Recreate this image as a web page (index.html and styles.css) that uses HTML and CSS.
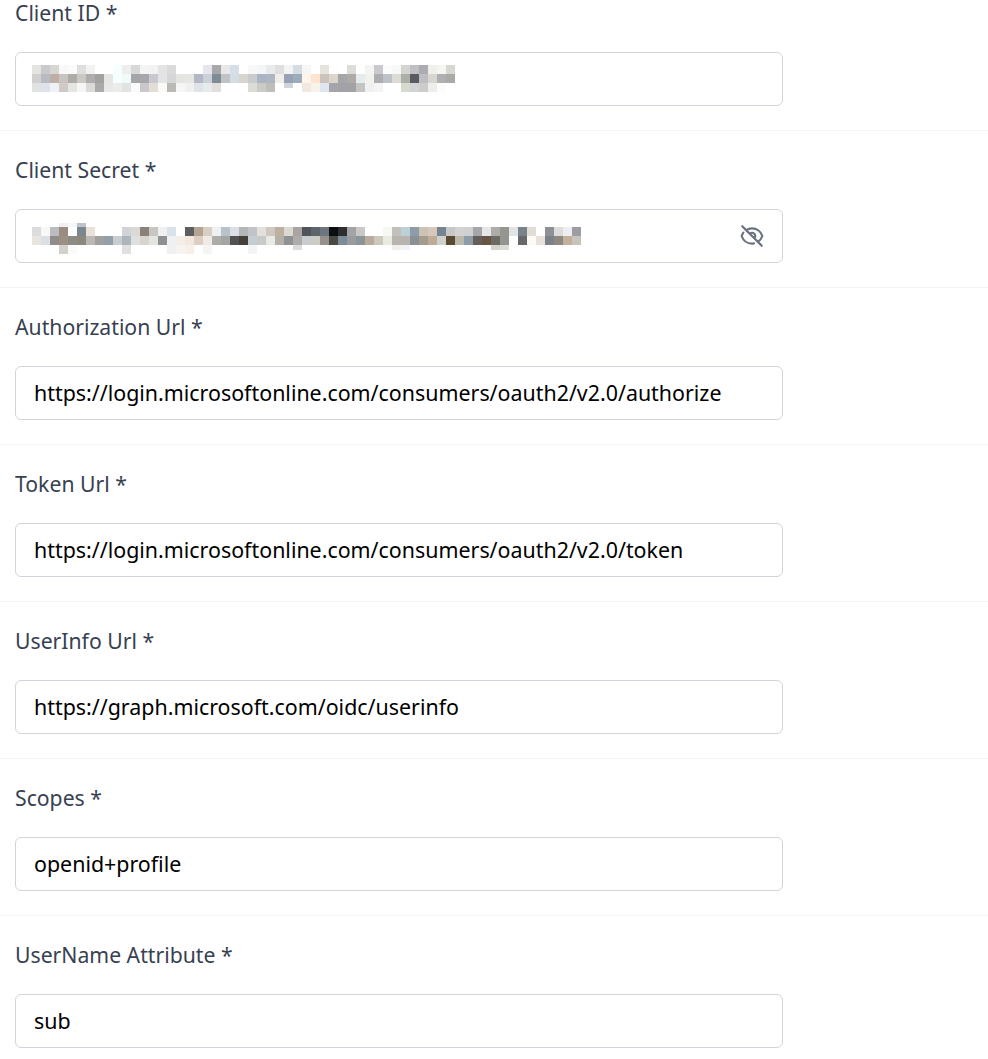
FILE: index.html
```html
<!DOCTYPE html>
<html lang="en">
<head>
<meta charset="utf-8">
<title>OAuth settings</title>
<link rel="stylesheet" href="styles.css">
</head>
<body>
<form class="form">
  <div class="row"><label class="label">Client ID *</label>
    <div class="field field-masked">
      <svg class="mosaic mosaic-id" viewBox="0 0 423 28" aria-hidden="true">
        <g>
          <rect x="0" fill="#e6e4e0"/><rect x="9" fill="#c9c8cc"/><rect x="18" fill="#d8d6d0"/><rect x="27" fill="#f8f8f8"/><rect x="36" fill="#fbfbfb"/><rect x="45" fill="#dedede"/><rect x="54" fill="#f4f2f0"/><rect x="81" fill="#f5ffff"/><rect x="90" fill="#eeeeee"/><rect x="99" fill="#d8d8d8"/><rect x="108" fill="#f4f4f4"/><rect x="117" fill="#f2f2f4"/><rect x="126" fill="#e4e4e4"/><rect x="135" fill="#d8dadc"/><rect x="171" fill="#e6e6ec"/><rect x="180" fill="#a8a8ac"/><rect x="189" fill="#e8e8e8"/><rect x="198" fill="#d8dee8"/><rect x="216" fill="#f8f8f8"/><rect x="225" fill="#f2f6f8"/><rect x="234" fill="#e8eaec"/><rect x="243" fill="#dfdfdf"/><rect x="252" fill="#f2f4f4"/><rect x="261" fill="#d4dee2"/><rect x="270" fill="#f6f6f4"/><rect x="288" fill="#e6e2dc"/><rect x="315" fill="#dcdcd8"/><rect x="333" fill="#f4f4f2"/><rect x="342" fill="#c8cad0"/><rect x="351" fill="#fbfbfb"/><rect x="360" fill="#f8f8f8"/><rect x="369" fill="#d4d4d0"/><rect x="378" fill="#c0c0c4"/><rect x="387" fill="#acacb0"/><rect x="396" fill="#f0f0ea"/><rect x="405" fill="#f6f5f0"/><rect x="414" fill="#d8d8d2"/>
        </g>
        <g transform="translate(0 9)">
          <rect x="0" fill="#d0d0d0"/><rect x="9" fill="#b8bac4"/><rect x="18" fill="#bfaea6"/><rect x="27" fill="#cac4c0"/><rect x="36" fill="#aeaca8"/><rect x="45" fill="#ccc9c4"/><rect x="54" fill="#aeaeae"/><rect x="63" fill="#a2a2a0"/><rect x="72" fill="#e6e6e4"/><rect x="81" fill="#f5ffff"/><rect x="90" fill="#f0fafa"/><rect x="99" fill="#a4a6a8"/><rect x="108" fill="#a6a6ac"/><rect x="117" fill="#c8c8ce"/><rect x="126" fill="#e4e4e4"/><rect x="135" fill="#d4d6d8"/><rect x="144" fill="#e4e4e0"/><rect x="153" fill="#e8e6e2"/><rect x="162" fill="#b4b8c6"/><rect x="171" fill="#ccd0d8"/><rect x="180" fill="#7e8c98"/><rect x="189" fill="#c0c2c4"/><rect x="198" fill="#d4dce4"/><rect x="207" fill="#d8d4ce"/><rect x="216" fill="#c8cccc"/><rect x="225" fill="#aab4c2"/><rect x="234" fill="#aeb6c2"/><rect x="243" fill="#f0eeea"/><rect x="252" fill="#98a2b4"/><rect x="261" fill="#9cacb8"/><rect x="270" fill="#fff4ea"/><rect x="279" fill="#ffe4d0"/><rect x="288" fill="#ccc4bc"/><rect x="297" fill="#dcd6cc"/><rect x="306" fill="#a4a6a8"/><rect x="315" fill="#b0aaa6"/><rect x="324" fill="#e4ecf0"/><rect x="333" fill="#f2f2ec"/><rect x="342" fill="#acaeb0"/><rect x="351" fill="#bcc2c8"/><rect x="360" fill="#dcdcd4"/><rect x="369" fill="#acaea8"/><rect x="378" fill="#585c60"/><rect x="387" fill="#bcbec4"/><rect x="396" fill="#d8d6d0"/><rect x="405" fill="#b0b0b2"/><rect x="414" fill="#aaaaa8"/>
        </g>
        <g transform="translate(0 18)">
          <rect x="0" fill="#e0e2e4"/><rect x="9" fill="#dee2ea"/><rect x="18" fill="#eef2f6"/><rect x="27" fill="#cfcac6"/><rect x="36" fill="#e4e6e2"/><rect x="45" fill="#f6f6f6"/><rect x="54" fill="#dcdad8"/><rect x="63" fill="#aaaaa8"/><rect x="72" fill="#e8e8e6"/><rect x="81" fill="#ececea"/><rect x="90" fill="#e0e4e2"/><rect x="99" fill="#fafafa"/><rect x="108" fill="#c8c8cc"/><rect x="117" fill="#e4dcd6"/><rect x="126" fill="#fafaf8"/><rect x="135" fill="#bcb8b4"/><rect x="144" fill="#f6f6f4"/><rect x="153" fill="#f2f0ee"/><rect x="162" fill="#e0e4ea"/><rect x="171" fill="#e6eaea"/><rect x="180" fill="#e2dedc"/><rect x="216" fill="#dcdcd6"/><rect x="225" fill="#cccac6"/><rect x="234" fill="#c0beb8"/><rect x="252" fill="#d0d4dc" class="half"/><rect x="270" fill="#f2e8e0"/><rect x="279" fill="#f8f2ec"/><rect x="288" fill="#e0e6f0"/><rect x="297" fill="#a4a6ac"/><rect x="306" fill="#a2a2a8"/><rect x="315" fill="#a2a2a6"/><rect x="324" fill="#c4c4c0"/><rect x="333" fill="#eff0f0"/><rect x="342" fill="#f4f4f2"/><rect x="369" fill="#d4dace"/><rect x="378" fill="#d2d2d2"/><rect x="387" fill="#ccccca"/><rect x="396" fill="#f0eeea"/><rect x="405" fill="#fcfcfc"/>
        </g>
      </svg>
    </div>
  </div>
  <div class="row"><label class="label">Client Secret *</label>
    <div class="field field-masked">
      <svg class="mosaic mosaic-secret" viewBox="0 0 549 36" aria-hidden="true">
        <g transform="translate(0 4.5)">
          <rect x="27" fill="#f0f0ee" class="half"/><rect x="36" fill="#f4f6f8" class="half"/><rect x="45" fill="#bfc4c8" class="half"/>
        </g>
        <g transform="translate(0 9)">
          <rect x="0" fill="#dcdcdc"/><rect x="9" fill="#f8f8f8"/><rect x="18" fill="#bcbcc0"/><rect x="27" fill="#9a8c7e"/><rect x="45" fill="#7c868e"/><rect x="54" fill="#e8e2da"/><rect x="90" fill="#d0d4d8"/><rect x="99" fill="#dcd8d4"/><rect x="108" fill="#8a8278"/><rect x="117" fill="#c8c6c2"/><rect x="126" fill="#eef0f2"/><rect x="135" fill="#d8e2ea"/><rect x="153" fill="#5c5e62"/><rect x="162" fill="#b4a494"/><rect x="171" fill="#d8cec2"/><rect x="180" fill="#eef0f2"/><rect x="189" fill="#b8c2ca"/><rect x="198" fill="#dae0e6"/><rect x="207" fill="#b4b6b8"/><rect x="216" fill="#c0c4c8"/><rect x="225" fill="#e4e0dc"/><rect x="234" fill="#cfc8c0"/><rect x="243" fill="#bcb0a0"/><rect x="252" fill="#dcd8d2"/><rect x="261" fill="#aaa4a0"/><rect x="270" fill="#50545a"/><rect x="279" fill="#5e646c"/><rect x="288" fill="#6c7680"/><rect x="297" fill="#0c0e10"/><rect x="306" fill="#2c2e32"/><rect x="315" fill="#a4a4a6"/><rect x="324" fill="#c8c8c8"/><rect x="351" fill="#f6f8f2"/><rect x="360" fill="#c4c0bc"/><rect x="369" fill="#bcd0d8"/><rect x="378" fill="#8c9ca8"/><rect x="387" fill="#ccc2b4"/><rect x="396" fill="#d8c8bc"/><rect x="405" fill="#748490"/><rect x="414" fill="#c8c8ca"/><rect x="423" fill="#d4d2d0"/><rect x="432" fill="#d0d0d0"/><rect x="441" fill="#a4a6ac"/><rect x="450" fill="#e6e6e8"/><rect x="459" fill="#acacaa"/><rect x="468" fill="#969690"/><rect x="477" fill="#e0e4e4"/><rect x="486" fill="#78828a"/><rect x="495" fill="#e0dcd6"/><rect x="513" fill="#8e9098"/><rect x="522" fill="#dcdcdc"/><rect x="531" fill="#eceef0"/><rect x="540" fill="#9c9ca4"/>
        </g>
        <g transform="translate(0 18)">
          <rect x="0" fill="#e8e4de"/><rect x="9" fill="#dce0e4"/><rect x="18" fill="#908c88"/><rect x="27" fill="#9c9084"/><rect x="36" fill="#8e8a84"/><rect x="45" fill="#8c8880"/><rect x="54" fill="#bcb8b4"/><rect x="63" fill="#a2a09e"/><rect x="72" fill="#92a0aa"/><rect x="81" fill="#c8cdd2"/><rect x="90" fill="#acb6bc"/><rect x="99" fill="#dde0de"/><rect x="108" fill="#d8d4d0"/><rect x="117" fill="#e4e4e0"/><rect x="126" fill="#8e9094"/><rect x="135" fill="#eef0f2"/><rect x="144" fill="#f4eee8"/><rect x="153" fill="#f2e8dc"/><rect x="162" fill="#dccec0"/><rect x="171" fill="#f0eae6"/><rect x="180" fill="#aeaca8"/><rect x="189" fill="#a4a6a4"/><rect x="198" fill="#505254"/><rect x="207" fill="#44403a"/><rect x="216" fill="#c6ccd4"/><rect x="225" fill="#c8cac8"/><rect x="234" fill="#e8eae6"/><rect x="243" fill="#b4b0a8"/><rect x="252" fill="#8e9294"/><rect x="261" fill="#acacac"/><rect x="270" fill="#c8ccce"/><rect x="279" fill="#ccccc4"/><rect x="288" fill="#98908a"/><rect x="297" fill="#4a4844"/><rect x="306" fill="#7a8c98"/><rect x="315" fill="#989ca0"/><rect x="324" fill="#8c9498"/><rect x="333" fill="#b8ac9e"/><rect x="342" fill="#ccc8bc"/><rect x="351" fill="#eaeae0"/><rect x="360" fill="#b8b4ae"/><rect x="369" fill="#b8b4ae"/><rect x="378" fill="#8a9094"/><rect x="387" fill="#a49c8c"/><rect x="396" fill="#bcac98"/><rect x="405" fill="#d0d0cc"/><rect x="414" fill="#5a4a34"/><rect x="423" fill="#bcb8ac"/><rect x="432" fill="#8c9ca8"/><rect x="441" fill="#645e5a"/><rect x="450" fill="#665444"/><rect x="459" fill="#6c6a62"/><rect x="468" fill="#949490"/><rect x="486" fill="#686868"/><rect x="495" fill="#fcfaf4"/><rect x="504" fill="#e8e0da"/><rect x="513" fill="#7c8088"/><rect x="522" fill="#8e8880"/><rect x="531" fill="#c0b09c"/><rect x="540" fill="#c8c4bc"/>
        </g>
        <g transform="translate(0 27)">
          <rect x="27" fill="#d4d0cc"/><rect x="36" fill="#fafafa"/><rect x="90" fill="#e0e0e2"/><rect x="135" fill="#f0f0f2"/><rect x="144" fill="#f6f4f0"/><rect x="153" fill="#f8f0e8"/><rect x="171" fill="#f4f4f2"/><rect x="216" fill="#f2f4f6"/><rect x="261" fill="#dcdcdc" class="half"/><rect x="360" fill="#f4eeea" class="half"/><rect x="369" fill="#f0f4f8" class="half"/><rect x="459" fill="#d4d4d0" class="half"/><rect x="468" fill="#dcdcd4" class="half"/>
        </g>
      </svg>
      <svg class="eye" viewBox="0 0 24 24" fill="none" stroke="currentColor" stroke-width="2" stroke-linecap="round" stroke-linejoin="round" aria-hidden="true">
        <path d="M13.875 18.825A10.05 10.05 0 0112 19c-4.478 0-8.268-2.943-9.543-7a9.97 9.97 0 011.563-3.029m5.858.908a3 3 0 114.243 4.243M9.878 9.878l4.242 4.242M9.88 9.88l-3.29-3.29m7.532 7.532l3.29 3.29M3 3l3.59 3.59m0 0A9.953 9.953 0 0112 5c4.478 0 8.268 2.943 9.543 7a10.025 10.025 0 01-4.132 5.411m0 0L21 21"/>
      </svg>
    </div>
  </div>
  <div class="row"><label class="label">Authorization Url *</label><div class="field">https://login.microsoftonline.com/consumers/oauth2/v2.0/authorize</div></div>
  <div class="row"><label class="label">Token Url *</label><div class="field">https://login.microsoftonline.com/consumers/oauth2/v2.0/token</div></div>
  <div class="row"><label class="label">UserInfo Url *</label><div class="field">https://graph.microsoft.com/oidc/userinfo</div></div>
  <div class="row"><label class="label">Scopes *</label><div class="field">openid+profile</div></div>
  <div class="row"><label class="label">UserName Attribute *</label><div class="field">sub</div></div>
</form>
</body>
</html>
```
FILE: styles.css
```css
html, body { margin: 0; padding: 0; background: #fff; overflow: hidden; }
.form { margin-top: -26px; font-family: "Noto Sans", sans-serif; }
.row { padding: 24px 0 24px 15px; border-bottom: 1px solid #f3f4f6; }
.label { display: block; height: 30px; line-height: 30px; font-size: 21.2px; color: #374151; margin-bottom: 24px; }
.field { box-sizing: border-box; width: 768px; height: 54px; line-height: 52px; padding: 0 18px; border: 1px solid #d1d5db; border-radius: 6px; font-size: 21.4px; color: #000; }
.field-masked { display: flex; align-items: center; justify-content: space-between; padding: 0 17px 0 16px; }
.mosaic { display: block; flex: none; shape-rendering: crispEdges; }
.mosaic rect { width: 9px; height: 9px; }
.mosaic rect.half { height: 4.5px; }
.mosaic-id { width: 423px; height: 28px; }
.mosaic-secret { width: 549px; height: 36px; }
.eye { display: block; flex: none; width: 26px; height: 26px; color: #6b7280; }
```
